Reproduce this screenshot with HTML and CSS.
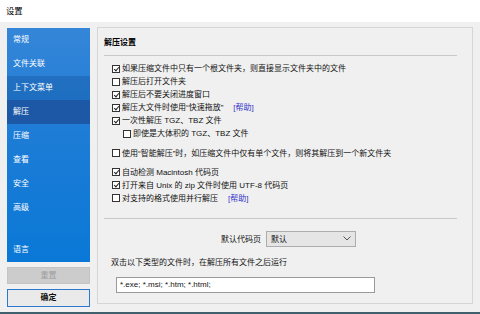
FILE: index.html
```html
<!DOCTYPE html>
<html lang="zh-CN">
<head>
<meta charset="utf-8">
<title>设置</title>
<link rel="stylesheet" href="styles.css">
</head>
<body>
<div class="window">
  <div class="titlebar">设置</div>
  <div class="main">
    <div class="left">
      <nav class="sidebar">
        <div class="nav-item">常规</div>
        <div class="nav-item">文件关联</div>
        <div class="nav-item hover">上下文菜单</div>
        <div class="nav-item active">解压</div>
        <div class="nav-item">压缩</div>
        <div class="nav-item">查看</div>
        <div class="nav-item">安全</div>
        <div class="nav-item">高级</div>
        <div class="nav-item bottom">语言</div>
      </nav>
      <div class="btn disabled">重置</div>
      <div class="btn primary">确定</div>
    </div>
    <section class="panel">
      <div class="panel-title">解压设置</div>
      <div class="rule"></div>
      <div class="group">
        <label class="cb"><span class="box checked"></span>如果压缩文件中只有一个根文件夹，则直接显示文件夹中的文件</label>
        <label class="cb"><span class="box"></span>解压后打开文件夹</label>
        <label class="cb"><span class="box checked"></span>解压后不要关闭进度窗口</label>
        <label class="cb"><span class="box checked"></span>解压大文件时使用“快速拖放”<span class="help">[帮助]</span></label>
        <label class="cb"><span class="box checked"></span>一次性解压 TGZ、TBZ 文件</label>
        <label class="cb indent"><span class="box"></span>即使是大体积的 TGZ、TBZ 文件</label>
      </div>
      <div class="group gap7">
        <label class="cb"><span class="box"></span>使用“智能解压”时，如压缩文件中仅有单个文件，则将其解压到一个新文件夹</label>
      </div>
      <div class="group gap6">
        <label class="cb"><span class="box checked"></span>自动检测 Macintosh 代码页</label>
        <label class="cb"><span class="box checked"></span>打开来自 Unix 的 zip 文件时使用 UTF-8 代码页</label>
        <label class="cb"><span class="box"></span>对支持的格式使用并行解压<span class="help">[帮助]</span></label>
      </div>
      <div class="rule rule2"></div>
      <div class="codepage-row">
        <span class="codepage-label">默认代码页</span>
        <div class="select"><span>默认</span><svg class="chev" width="8" height="5" viewBox="0 0 8 5"><polyline points="0.5,0.5 4,4 7.5,0.5" fill="none" stroke="#555" stroke-width="1"/></svg></div>
      </div>
      <div class="run-label">双击以下类型的文件时，在解压所有文件之后运行</div>
      <div class="input">*.exe; *.msi; *.htm; *.html;</div>
    </section>
  </div>
</div>
</body>
</html>
```
FILE: styles.css
```css
html, body {
  margin: 0;
  padding: 0;
}
body {
  width: 480px;
  height: 314px;
  overflow: hidden;
  background: #f0f0f0;
  font-family: "Liberation Sans", "Noto Sans CJK SC", sans-serif;
  font-size: 8px;
  color: #111;
}
.window {
  height: 314px;
  box-sizing: border-box;
  border-bottom: 2px solid #41606d;
  display: flex;
  flex-direction: column;
}
.titlebar {
  height: 22px;
  line-height: 22px;
  background: #fff;
  padding-left: 6px;
  font-size: 8.3px;
  color: #000;
}
.main {
  display: flex;
  padding: 5px 0 0 7px;
}
.left {
  width: 83px;
  display: flex;
  flex-direction: column;
  padding-top: 1px;
}
.sidebar {
  height: 234px;
  background: linear-gradient(180deg, #3586d8 0%, #1f7dd6 40%, #0a78d7 100%);
  display: flex;
  flex-direction: column;
}
.nav-item {
  height: 24px;
  line-height: 24px;
  padding-left: 6px;
  color: #fff;
}
.nav-item.hover {
  background: rgba(10, 50, 120, 0.22);
}
.nav-item.active {
  background: #1c58a5;
}
.nav-item.bottom {
  margin-top: auto;
}
.btn {
  box-sizing: border-box;
  text-align: center;
}
.btn.disabled {
  margin-top: 5px;
  height: 17px;
  line-height: 15px;
  background: #cccccc;
  border: 1px solid #c4c4c4;
  color: #9f9f9f;
}
.btn.primary {
  margin-top: 5px;
  height: 18px;
  line-height: 16px;
  background: #eaeaea;
  border: 1px solid #2a78cf;
  color: #111;
  font-weight: bold;
}
.panel {
  margin-left: 7px;
  width: 376px;
  height: 277px;
  box-sizing: border-box;
  border: 1px solid #d6d6d6;
  padding: 8px 15px 0 6px;
}
.panel-title {
  height: 14px;
  line-height: 14px;
  font-weight: bold;
  color: #000;
}
.rule {
  margin-top: 5px;
  height: 1px;
  background: #c9c9c9;
}
.rule2 {
  margin-top: 13px;
}
.group {
  margin-top: 6px;
  padding-left: 8px;
}
.group.gap7 {
  margin-top: 6.5px;
}
.group.gap6 {
  margin-top: 6px;
}
.cb {
  display: flex;
  align-items: center;
  height: 13px;
  line-height: 13px;
  white-space: nowrap;
}
.cb.indent {
  padding-left: 11px;
}
.box {
  width: 8px;
  height: 8px;
  box-sizing: border-box;
  border: 1px solid #333;
  background: #fff;
  margin-right: 2px;
  flex: none;
  position: relative;
}
.box.checked::after {
  content: "";
  position: absolute;
  left: 1px;
  top: 0px;
  width: 2px;
  height: 4px;
  border-right: 1px solid #222;
  border-bottom: 1px solid #222;
  transform: rotate(40deg);
  transform-origin: 50% 50%;
  margin-left: 1px;
}
.help {
  color: #3434c8;
  margin-left: 10px;
}
.codepage-row {
  margin-top: 12px;
  display: flex;
  align-items: center;
  padding-left: 117px;
}
.codepage-label {
  margin-right: 5px;
}
.select {
  width: 90px;
  height: 16px;
  box-sizing: border-box;
  border: 1px solid #adadad;
  background: #e5e5e5;
  display: flex;
  align-items: center;
  justify-content: space-between;
  padding: 0 4px 0 4px;
}
.chev {
  display: block;
}
.run-label {
  margin-top: 9.5px;
  height: 13px;
  line-height: 13px;
  padding-left: 7px;
}
.input {
  margin-top: 7.5px;
  margin-left: 12px;
  width: 259px;
  height: 16px;
  box-sizing: border-box;
  border: 1px solid #9a9a9a;
  background: #fff;
  padding-left: 3px;
  line-height: 14px;
  font-size: 8px;
}
```
